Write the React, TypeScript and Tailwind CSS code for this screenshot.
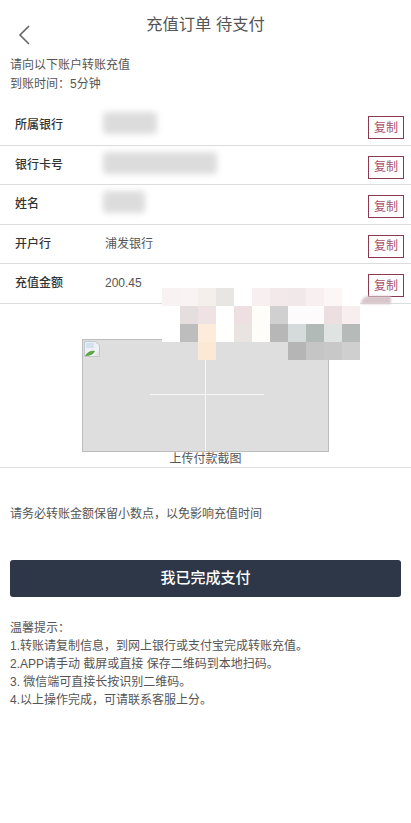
const font = { fontFamily: '"Liberation Sans", "Noto Sans CJK SC", sans-serif' };

interface Row {
  label: string;
  value?: string;
  blurWidth?: number;
}

const rows: Row[] = [
  { label: '所属银行', blurWidth: 54 },
  { label: '银行卡号', blurWidth: 114 },
  { label: '姓名', blurWidth: 42 },
  { label: '开户行', value: '浦发银行' },
  { label: '充值金额', value: '200.45' },
];

const mosaic: string[] = [
  '#f9f2f3', '#f9f3f4', '#f5efec', '#e8e6e3', '#ffffff', '#f8eff0', '#f3e9eb', '#f1e9e9', '#f8eff0', '#fcf6f6', '#ffffff',
  '#ffffff', '#e5dedf', '#eee2e4', '#ffffff', '#eddfe2', '#fffdfa', '#d0d0d0', '#fdfbfb', '#fdfbfb', '#ecdfe2', '#f8eef0',
  '#ffffff', '#bdbdbd', '#fdecdb', '#fffffd', '#e9e4e1', '#fffdf9', '#b7b7b7', '#d5dbda', '#b2bab8', '#dfe4e3', '#b6bab8',
  'transparent', 'transparent', '#fbe8d5', 'transparent', 'transparent', 'transparent', 'transparent', '#b5b5b5', '#c5c5c5', '#c8c8c8', '#cfcfcf',
];

function BrokenImage() {
  return (
    <svg width="16" height="16" viewBox="0 0 16 16" className="block">
      <path d="M0.5 0.5H11L15.5 4V15.5H0.5Z" fill="#eef1f3" stroke="#c2c8ce" />
      <path d="M2 2H10V7H2Z" fill="#d3e0ee" />
      <path d="M1 15C3 11 7 9 11 10C10 13 6 15 1 15Z" fill="#5fa548" />
      <path d="M10 15L15 10V15Z" fill="#e4e4e4" />
    </svg>
  );
}

function InfoRow({ row }: { row: Row }) {
  return (
    <div className="flex h-[39.5px] items-start border-b border-[#dcdcdc] pl-[15px] pr-[7px]">
      <span className="mt-[9px] w-[90px] text-[12px] leading-[20px] font-medium text-[#333]">{row.label}</span>
      {row.blurWidth ? (
        <div className="mt-[6px] -ml-[2px] h-[22px] rounded-sm bg-[#dcdcdc] blur-[3px]" style={{ width: row.blurWidth }} />
      ) : (
        <span className="mt-[9px] text-[12px] leading-[20px] text-[#555]">{row.value}</span>
      )}
      <button className="mt-[10px] ml-auto flex h-[23px] w-[36px] items-center justify-center border border-[#8a3a4c] text-[12px] text-[#a8526a]">
        复制
      </button>
    </div>
  );
}

export default function App() {
  return (
    <div className="relative min-h-[823px] w-[411px] overflow-hidden bg-white text-[#444]" style={font}>
      <header className="grid h-[56px] grid-cols-[1fr_auto_1fr]">
        <svg width="12" height="20" viewBox="0 0 12 20" className="mt-[25px] ml-[18px]">
          <path d="M11 1L2 10L11 19" fill="none" stroke="#666" strokeWidth="1.6" />
        </svg>
        <h1 className="mt-[12px] text-[16.3px] leading-[24px] font-normal text-[#555]">充值订单 待支付</h1>
      </header>

      <p className="pl-[10px] text-[12px] leading-[19px] text-[#555]">
        请向以下账户转账充值
        <br />
        到账时间：5分钟
      </p>

      <section className="mt-[12px]">
        {rows.map((row) => (
          <InfoRow key={row.label} row={row} />
        ))}
      </section>

      <div className="mt-[35px] flex flex-col items-center">
        <div className="relative h-[113px] w-[247px] border border-[#bdbdbd] bg-[#dedede] p-[1px]">
          <BrokenImage />
          <div className="absolute top-[54px] left-[67px] h-[1px] w-[114px] bg-[#f7f7f7]" />
          <div className="absolute top-0 bottom-0 left-[122px] w-[1px] bg-[#f7f7f7]" />
        </div>
        <span className="text-[12px] leading-[15px] text-[#555]">上传付款截图</span>
      </div>
      <div className="border-b border-[#e2e2e2]" />

      <p className="mt-[37px] pl-[10px] text-[12px] leading-[18px] text-[#555]">
        请务必转账金额保留小数点，以免影响充值时间
      </p>

      <div className="mt-[37px] px-[10px]">
        <button className="h-[37px] w-[391px] rounded-[3px] bg-[#2d3748] text-[15px] font-medium text-white">
          我已完成支付
        </button>
      </div>

      <div className="mt-[22px] pl-[10px] text-[12px] leading-[18.2px] text-[#555]">
        <p>温馨提示：</p>
        <p>1.转账请复制信息，到网上银行或支付宝完成转账充值。</p>
        <p>2.APP请手动 截屏或直接 保存二维码到本地扫码。</p>
        <p>3. 微信端可直接长按识别二维码。</p>
        <p>4.以上操作完成，可请联系客服上分。</p>
      </div>

      {/* pixelated sticker lying over the upload box */}
      <div className="absolute top-[288px] left-[162px] grid grid-cols-[repeat(11,18px)] grid-rows-[repeat(4,18px)]">
        {mosaic.map((color, i) => (
          <div key={i} style={{ backgroundColor: color }} />
        ))}
      </div>
      <div className="absolute top-[296px] left-[361px] h-[8px] w-[30px] rounded-tl-full bg-[#d8c6cb] blur-[1px]" />
    </div>
  );
}
